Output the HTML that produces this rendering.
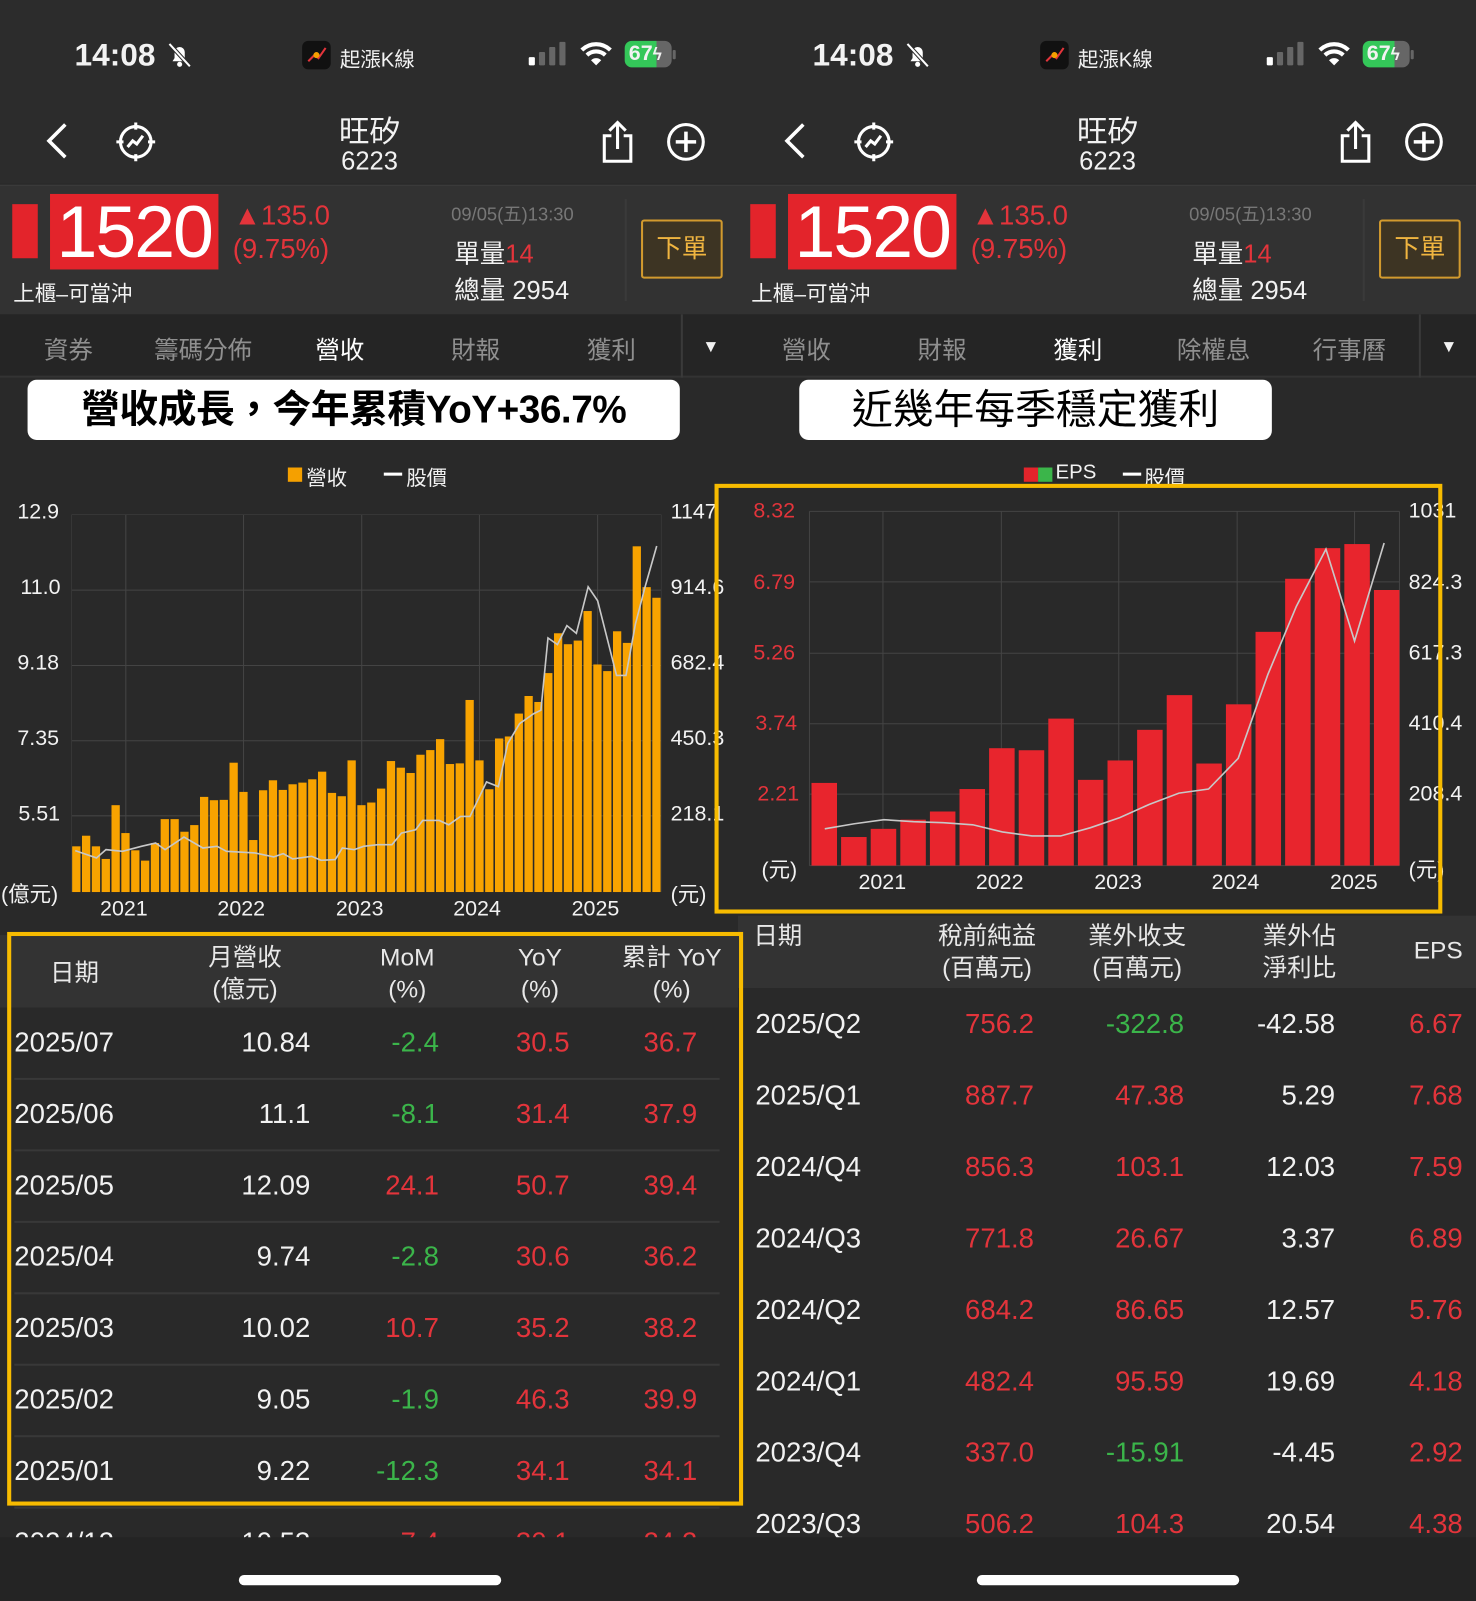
<!DOCTYPE html>
<html><head><meta charset="utf-8">
<style>
*{margin:0;padding:0;box-sizing:border-box}
html,body{width:1476px;height:1600px;overflow:hidden;background:#292929}
#w{position:absolute;left:0;top:0;width:1446px;height:1568px;transform:scale(1.02075);transform-origin:0 0;font-family:"Liberation Sans","Noto Sans CJK TC",sans-serif;color:#f2f2f2}
.p{position:absolute;top:0;width:723px;height:1568px;overflow:hidden;background:#292929}
.a{position:absolute;white-space:nowrap}
.r{color:#e3343b}.g{color:#3bb54a}.gy{color:#9a9a9a}
.hdr{position:absolute;left:0;top:0;width:723px;height:180px;background:#2c2c2c}
.price{position:absolute;left:0;top:181px;width:723px;height:127px;background:#323232;border-top:1px solid #3c3c3c}
.tabs{position:absolute;left:0;top:308px;width:723px;height:62px;background:#252525;border-bottom:2px solid #333}
.tab{position:absolute;top:15px;font-size:24px;color:#8f8f8f;transform:translateX(-50%)}
.th{position:absolute;left:0;width:723px;background:#333}
.c{transform:translateX(-50%);text-align:center;font-size:24px;line-height:31px;color:#e8e8e8}
.row{font-size:27px}
.sep{position:absolute;left:14px;width:691px;height:2px;background:#383838}
.bottom{position:absolute;left:0;top:1506px;width:723px;height:62px;background:#242424}
.home{position:absolute;top:1543px;width:257px;height:10px;border-radius:5px;background:#fff}
.yb{position:absolute;border:4px solid #f7bb00}
</style></head><body><div id="w">

<!-- LEFT PANEL -->
<div class="p" style="left:0">
 <div class="hdr"></div>
 <div class="a" style="left:73px;top:36px;font-size:31px;font-weight:bold">14:08</div>
 <svg class="a" style="left:162px;top:40px" width="28" height="28" viewBox="0 0 28 28"><path d="M7 20h14l-2-3v-6a5 5 0 0 0-10 0v6z" fill="#fff"/><circle cx="14" cy="23" r="2.5" fill="#fff"/><path d="M4 3l20 22" stroke="#2c2c2c" stroke-width="4"/><path d="M4 3l20 22" stroke="#fff" stroke-width="2"/></svg>
 <div class="a" style="left:296px;top:40px;width:28px;height:28px;border-radius:6px;background:#111"><svg width="28" height="28"><path d="M6 20l6-6 4 3 7-10" stroke="#e3343b" stroke-width="2" fill="none"/><circle cx="14" cy="14" r="3" fill="#f5a000"/></svg></div>
 <div class="a" style="left:333px;top:42px;font-size:20px">起漲K線</div>
 <svg class="a" style="left:516px;top:40px" width="40" height="26"><rect x="2" y="16" width="6" height="8" rx="1" fill="#fff"/><rect x="12" y="11" width="6" height="13" rx="1" fill="#666"/><rect x="22" y="6" width="6" height="18" rx="1" fill="#666"/><rect x="32" y="1" width="6" height="23" rx="1" fill="#666"/></svg>
 <svg class="a" style="left:568px;top:40px" width="32" height="26" viewBox="0 0 32 26"><path d="M2 9a20 20 0 0 1 28 0" stroke="#fff" stroke-width="4" fill="none"/><path d="M7 14a13 13 0 0 1 18 0" stroke="#fff" stroke-width="4" fill="none"/><path d="M16 24l-5-5a7 7 0 0 1 10 0z" fill="#fff"/></svg>
 <div class="a" style="left:612px;top:40px;width:46px;height:26px;border-radius:7px;background:linear-gradient(90deg,#34c759 68%,#666 68%);font-size:21px;font-weight:bold;line-height:26px;padding-left:4px">67<span style="font-size:17px">ϟ</span></div>
 <div class="a" style="left:659px;top:49px;width:3px;height:9px;background:#666;border-radius:1px"></div>

 <svg class="a" style="left:40px;top:118px" width="30" height="40"><path d="M24 4L8 20l16 16" stroke="#fff" stroke-width="3.5" fill="none"/></svg>
 <svg class="a" style="left:112px;top:118px" width="42" height="42" viewBox="0 0 42 42"><circle cx="21" cy="21" r="15" stroke="#fff" stroke-width="3" fill="none"/><path d="M21 2v7M21 33v7M2 21h7M33 21h7" stroke="#fff" stroke-width="3"/><path d="M13 26l5-6 4 3 6-8" stroke="#fff" stroke-width="3" fill="none"/></svg>
 <div class="a" style="left:362px;top:104px;transform:translateX(-50%);font-size:30px">旺矽</div>
 <div class="a" style="left:362px;top:144px;transform:translateX(-50%);font-size:25px">6223</div>
 <svg class="a" style="left:588px;top:117px" width="34" height="44" viewBox="0 0 34 44"><path d="M11 16H4v25h26V16h-7" stroke="#fff" stroke-width="3" fill="none"/><path d="M17 29V4M9 11l8-8 8 8" stroke="#fff" stroke-width="3" fill="none"/></svg>
 <svg class="a" style="left:651px;top:118px" width="42" height="42"><circle cx="21" cy="21" r="17" stroke="#fff" stroke-width="3" fill="none"/><path d="M21 11v20M11 21h20" stroke="#fff" stroke-width="3.5"/></svg>

 <div class="price"></div>
 <div class="a" style="left:12px;top:200px;width:25px;height:53px;background:#e3242b"></div>
 <div class="a" style="left:49px;top:190px;width:165px;height:74px;background:#e3242b;color:#fff;font-size:72px;line-height:76px;letter-spacing:-2px;text-align:center">1520</div>
 <div class="a r" style="left:229px;top:196px;font-size:27px">▲135.0</div>
 <div class="a r" style="left:228px;top:229px;font-size:27px">(9.75%)</div>
 <div class="a" style="left:13px;top:272px;font-size:21px">上櫃–可當沖</div>
 <div class="a" style="left:442px;top:196px;font-size:18px;color:#777">09/05(五)13:30</div>
 <div class="a" style="left:445px;top:229px;font-size:25px">單量<span class="r">14</span></div>
 <div class="a" style="left:445px;top:265px;font-size:25px">總量 2954</div>
 <div class="a" style="left:612px;top:195px;width:2px;height:100px;background:#3a3a3a"></div>
 <div class="a" style="left:628px;top:215px;width:80px;height:58px;border:2px solid #d29a2e;border-radius:3px;background:#3d3423;color:#f0b540;font-size:25px;text-align:center;line-height:54px">下單</div>

 <div class="tabs"></div>
 <div class="tab" style="left:67px;top:323px">資券</div>
 <div class="tab" style="left:199px;top:323px">籌碼分佈</div>
 <div class="tab" style="left:333px;top:323px;color:#fff">營收</div>
 <div class="tab" style="left:466px;top:323px">財報</div>
 <div class="tab" style="left:599px;top:323px">獲利</div>
 <div class="a" style="left:667px;top:308px;width:2px;height:62px;background:#3a3a3a"></div>
 <div class="a" style="left:688px;top:330px;font-size:17px">▼</div>

 <div class="a" style="left:27px;top:372px;width:639px;height:59px;background:#fff;border-radius:9px;color:#000;font-size:38px;font-weight:bold;text-align:center;line-height:60px;letter-spacing:-0.5px">營收成長，今年累積YoY+36.7%</div>

 <div class="a" style="left:282px;top:458px;width:14px;height:14px;background:#f5a000"></div>
 <div class="a" style="left:300px;top:452px;font-size:20px">營收</div>
 <div class="a" style="left:376px;top:463px;width:18px;height:3px;background:#fff"></div>
 <div class="a" style="left:398px;top:452px;font-size:20px">股價</div>

 <div class="a" style="left:17px;top:490px;font-size:21px">12.9</div>
 <div class="a" style="left:20px;top:564px;font-size:21px">11.0</div>
 <div class="a" style="left:17px;top:638px;font-size:21px">9.18</div>
 <div class="a" style="left:17px;top:712px;font-size:21px">7.35</div>
 <div class="a" style="left:18px;top:786px;font-size:21px">5.51</div>
 <div class="a" style="left:1px;top:860px;font-size:21px">(億元)</div>
 <div class="a" style="left:657px;top:490px;font-size:21px">1147</div>
 <div class="a" style="left:657px;top:564px;font-size:21px">914.6</div>
 <div class="a" style="left:657px;top:638px;font-size:21px">682.4</div>
 <div class="a" style="left:657px;top:712px;font-size:21px">450.3</div>
 <div class="a" style="left:657px;top:786px;font-size:21px">218.1</div>
 <div class="a" style="left:657px;top:860px;font-size:21px">(元)</div>
 <div class="a" style="left:98px;top:879px;font-size:21px">2021</div>
 <div class="a" style="left:213px;top:879px;font-size:21px">2022</div>
 <div class="a" style="left:329px;top:879px;font-size:21px">2023</div>
 <div class="a" style="left:444px;top:879px;font-size:21px">2024</div>
 <div class="a" style="left:560px;top:879px;font-size:21px">2025</div>

 <svg class="a" style="left:70px;top:504px" width="578" height="370" viewBox="152 190 1248 1138" preserveAspectRatio="none">
  <g stroke="#444" stroke-width="1" vector-effect="non-scaling-stroke">
   <path d="M152 190H1400M152 418H1400M152 645H1400M152 872H1400M152 1098H1400M267 190V1328M516 190V1328M766 190V1328M1015 190V1328M1265 190V1328M152 190V1328M1400 190V1328" vector-effect="non-scaling-stroke"/>
  </g>
  <g fill="#f8a300">
<rect x="153.5" y="1190" width="17.5" height="138"/><rect x="174.3" y="1158" width="17.5" height="170"/><rect x="195.1" y="1190" width="17.5" height="138"/><rect x="215.9" y="1228" width="17.5" height="100"/><rect x="236.7" y="1066" width="17.5" height="262"/><rect x="257.5" y="1150" width="17.5" height="178"/><rect x="278.3" y="1202" width="17.5" height="126"/><rect x="299.1" y="1233" width="17.5" height="95"/><rect x="319.9" y="1180" width="17.5" height="148"/><rect x="340.7" y="1108" width="17.5" height="220"/><rect x="361.5" y="1108" width="17.5" height="220"/><rect x="382.3" y="1146" width="17.5" height="182"/><rect x="403.1" y="1126" width="17.5" height="202"/><rect x="423.9" y="1041" width="17.5" height="287"/><rect x="444.7" y="1051" width="17.5" height="277"/><rect x="465.5" y="1050" width="17.5" height="278"/><rect x="486.3" y="938" width="17.5" height="390"/><rect x="507.1" y="1026" width="17.5" height="302"/><rect x="527.9" y="1171" width="17.5" height="157"/><rect x="548.7" y="1021" width="17.5" height="307"/><rect x="569.5" y="991" width="17.5" height="337"/><rect x="590.3" y="1020" width="17.5" height="308"/><rect x="611.1" y="1003" width="17.5" height="325"/><rect x="631.9" y="998" width="17.5" height="330"/><rect x="652.7" y="988" width="17.5" height="340"/><rect x="673.5" y="965" width="17.5" height="363"/><rect x="694.3" y="1029" width="17.5" height="299"/><rect x="715.1" y="1039" width="17.5" height="289"/><rect x="735.9" y="931" width="17.5" height="397"/><rect x="756.7" y="1066" width="17.5" height="262"/><rect x="777.5" y="1058" width="17.5" height="270"/><rect x="798.3" y="1016" width="17.5" height="312"/><rect x="819.1" y="933" width="17.5" height="395"/><rect x="839.9" y="953" width="17.5" height="375"/><rect x="860.7" y="969" width="17.5" height="359"/><rect x="881.5" y="914" width="17.5" height="414"/><rect x="902.3" y="900" width="17.5" height="428"/><rect x="923.1" y="867" width="17.5" height="461"/><rect x="943.9" y="942" width="17.5" height="386"/><rect x="964.7" y="940" width="17.5" height="388"/><rect x="985.5" y="749" width="17.5" height="579"/><rect x="1006.3" y="931" width="17.5" height="397"/><rect x="1027.1" y="1018" width="17.5" height="310"/><rect x="1047.9" y="865" width="17.5" height="463"/><rect x="1068.7" y="859" width="17.5" height="469"/><rect x="1089.5" y="790" width="17.5" height="538"/><rect x="1110.3" y="737" width="17.5" height="591"/><rect x="1131.1" y="755" width="17.5" height="573"/><rect x="1151.9" y="668" width="17.5" height="660"/><rect x="1172.7" y="548" width="17.5" height="780"/><rect x="1193.5" y="581" width="17.5" height="747"/><rect x="1214.3" y="570" width="17.5" height="758"/><rect x="1235.1" y="481" width="17.5" height="847"/><rect x="1255.9" y="642" width="17.5" height="686"/><rect x="1276.7" y="662" width="17.5" height="666"/><rect x="1297.5" y="542" width="17.5" height="786"/><rect x="1318.3" y="577" width="17.5" height="751"/><rect x="1339.1" y="286" width="17.5" height="1042"/><rect x="1359.9" y="409" width="17.5" height="919"/><rect x="1380.7" y="441" width="17.5" height="887"/>
  </g>
  <polyline fill="none" stroke="#c8c8c8" stroke-width="1.6" vector-effect="non-scaling-stroke" points="160,1203 205,1225 225,1200 260,1205 300,1190 330,1180 350,1200 390,1162 430,1195 460,1190 480,1205 540,1210 580,1222 600,1212 620,1228 660,1220 680,1232 710,1230 725,1195 750,1200 770,1190 800,1185 830,1185 850,1150 880,1140 895,1112 930,1112 950,1125 975,1100 995,1100 1030,996 1055,1010 1075,880 1100,820 1130,790 1145,780 1160,562 1180,582 1200,525 1220,548 1245,408 1265,450 1305,675 1325,675 1345,520 1365,410 1390,285"/>
 </svg>

 <div class="th" style="top:916px;height:71px"></div>
 <div class="a c" style="left:73px;top:938px">日期</div>
 <div class="a c" style="left:240px;top:923px">月營收<br>(億元)</div>
 <div class="a c" style="left:399px;top:923px">MoM<br>(%)</div>
 <div class="a c" style="left:529px;top:923px">YoY<br>(%)</div>
 <div class="a c" style="left:658px;top:923px">累計 YoY<br>(%)</div>

 <div id="lrows"></div>
 <!-- rows -->
 <div class="a row" style="left:14px;top:1006px">2025/07</div><div class="a row" style="right:419px;top:1006px">10.84</div><div class="a row g" style="right:293px;top:1006px">-2.4</div><div class="a row r" style="right:165px;top:1006px">30.5</div><div class="a row r" style="right:40px;top:1006px">36.7</div>
 <div class="sep" style="top:1056px"></div>
 <div class="a row" style="left:14px;top:1076px">2025/06</div><div class="a row" style="right:419px;top:1076px">11.1</div><div class="a row g" style="right:293px;top:1076px">-8.1</div><div class="a row r" style="right:165px;top:1076px">31.4</div><div class="a row r" style="right:40px;top:1076px">37.9</div>
 <div class="sep" style="top:1126px"></div>
 <div class="a row" style="left:14px;top:1146px">2025/05</div><div class="a row" style="right:419px;top:1146px">12.09</div><div class="a row r" style="right:293px;top:1146px">24.1</div><div class="a row r" style="right:165px;top:1146px">50.7</div><div class="a row r" style="right:40px;top:1146px">39.4</div>
 <div class="sep" style="top:1196px"></div>
 <div class="a row" style="left:14px;top:1216px">2025/04</div><div class="a row" style="right:419px;top:1216px">9.74</div><div class="a row g" style="right:293px;top:1216px">-2.8</div><div class="a row r" style="right:165px;top:1216px">30.6</div><div class="a row r" style="right:40px;top:1216px">36.2</div>
 <div class="sep" style="top:1266px"></div>
 <div class="a row" style="left:14px;top:1286px">2025/03</div><div class="a row" style="right:419px;top:1286px">10.02</div><div class="a row r" style="right:293px;top:1286px">10.7</div><div class="a row r" style="right:165px;top:1286px">35.2</div><div class="a row r" style="right:40px;top:1286px">38.2</div>
 <div class="sep" style="top:1336px"></div>
 <div class="a row" style="left:14px;top:1356px">2025/02</div><div class="a row" style="right:419px;top:1356px">9.05</div><div class="a row g" style="right:293px;top:1356px">-1.9</div><div class="a row r" style="right:165px;top:1356px">46.3</div><div class="a row r" style="right:40px;top:1356px">39.9</div>
 <div class="sep" style="top:1406px"></div>
 <div class="a row" style="left:14px;top:1426px">2025/01</div><div class="a row" style="right:419px;top:1426px">9.22</div><div class="a row g" style="right:293px;top:1426px">-12.3</div><div class="a row r" style="right:165px;top:1426px">34.1</div><div class="a row r" style="right:40px;top:1426px">34.1</div>
 <div class="sep" style="top:1476px"></div>
 <div class="a row" style="left:14px;top:1496px">2024/12</div><div class="a row" style="right:419px;top:1496px">10.53</div><div class="a row r" style="right:293px;top:1496px">7.4</div><div class="a row r" style="right:165px;top:1496px">30.1</div><div class="a row r" style="right:40px;top:1496px">24.2</div>

 <div class="bottom"></div>
 <div class="home" style="left:234px"></div>
</div>

<!-- RIGHT PANEL -->
<div class="p" style="left:723px">
 <div class="hdr"></div>
 <div class="a" style="left:73px;top:36px;font-size:31px;font-weight:bold">14:08</div>
 <svg class="a" style="left:162px;top:40px" width="28" height="28" viewBox="0 0 28 28"><path d="M7 20h14l-2-3v-6a5 5 0 0 0-10 0v6z" fill="#fff"/><circle cx="14" cy="23" r="2.5" fill="#fff"/><path d="M4 3l20 22" stroke="#2c2c2c" stroke-width="4"/><path d="M4 3l20 22" stroke="#fff" stroke-width="2"/></svg>
 <div class="a" style="left:296px;top:40px;width:28px;height:28px;border-radius:6px;background:#111"><svg width="28" height="28"><path d="M6 20l6-6 4 3 7-10" stroke="#e3343b" stroke-width="2" fill="none"/><circle cx="14" cy="14" r="3" fill="#f5a000"/></svg></div>
 <div class="a" style="left:333px;top:42px;font-size:20px">起漲K線</div>
 <svg class="a" style="left:516px;top:40px" width="40" height="26"><rect x="2" y="16" width="6" height="8" rx="1" fill="#fff"/><rect x="12" y="11" width="6" height="13" rx="1" fill="#666"/><rect x="22" y="6" width="6" height="18" rx="1" fill="#666"/><rect x="32" y="1" width="6" height="23" rx="1" fill="#666"/></svg>
 <svg class="a" style="left:568px;top:40px" width="32" height="26" viewBox="0 0 32 26"><path d="M2 9a20 20 0 0 1 28 0" stroke="#fff" stroke-width="4" fill="none"/><path d="M7 14a13 13 0 0 1 18 0" stroke="#fff" stroke-width="4" fill="none"/><path d="M16 24l-5-5a7 7 0 0 1 10 0z" fill="#fff"/></svg>
 <div class="a" style="left:612px;top:40px;width:46px;height:26px;border-radius:7px;background:linear-gradient(90deg,#34c759 68%,#666 68%);font-size:21px;font-weight:bold;line-height:26px;padding-left:4px">67<span style="font-size:17px">ϟ</span></div>
 <div class="a" style="left:659px;top:49px;width:3px;height:9px;background:#666;border-radius:1px"></div>

 <svg class="a" style="left:40px;top:118px" width="30" height="40"><path d="M24 4L8 20l16 16" stroke="#fff" stroke-width="3.5" fill="none"/></svg>
 <svg class="a" style="left:112px;top:118px" width="42" height="42" viewBox="0 0 42 42"><circle cx="21" cy="21" r="15" stroke="#fff" stroke-width="3" fill="none"/><path d="M21 2v7M21 33v7M2 21h7M33 21h7" stroke="#fff" stroke-width="3"/><path d="M13 26l5-6 4 3 6-8" stroke="#fff" stroke-width="3" fill="none"/></svg>
 <div class="a" style="left:362px;top:104px;transform:translateX(-50%);font-size:30px">旺矽</div>
 <div class="a" style="left:362px;top:144px;transform:translateX(-50%);font-size:25px">6223</div>
 <svg class="a" style="left:588px;top:117px" width="34" height="44" viewBox="0 0 34 44"><path d="M11 16H4v25h26V16h-7" stroke="#fff" stroke-width="3" fill="none"/><path d="M17 29V4M9 11l8-8 8 8" stroke="#fff" stroke-width="3" fill="none"/></svg>
 <svg class="a" style="left:651px;top:118px" width="42" height="42"><circle cx="21" cy="21" r="17" stroke="#fff" stroke-width="3" fill="none"/><path d="M21 11v20M11 21h20" stroke="#fff" stroke-width="3.5"/></svg>

 <div class="price"></div>
 <div class="a" style="left:12px;top:200px;width:25px;height:53px;background:#e3242b"></div>
 <div class="a" style="left:49px;top:190px;width:165px;height:74px;background:#e3242b;color:#fff;font-size:72px;line-height:76px;letter-spacing:-2px;text-align:center">1520</div>
 <div class="a r" style="left:229px;top:196px;font-size:27px">▲135.0</div>
 <div class="a r" style="left:228px;top:229px;font-size:27px">(9.75%)</div>
 <div class="a" style="left:13px;top:272px;font-size:21px">上櫃–可當沖</div>
 <div class="a" style="left:442px;top:196px;font-size:18px;color:#777">09/05(五)13:30</div>
 <div class="a" style="left:445px;top:229px;font-size:25px">單量<span class="r">14</span></div>
 <div class="a" style="left:445px;top:265px;font-size:25px">總量 2954</div>
 <div class="a" style="left:612px;top:195px;width:2px;height:100px;background:#3a3a3a"></div>
 <div class="a" style="left:628px;top:215px;width:80px;height:58px;border:2px solid #d29a2e;border-radius:3px;background:#3d3423;color:#f0b540;font-size:25px;text-align:center;line-height:54px">下單</div>

 <div class="tabs"></div>
 <div class="tab" style="left:67px;top:323px">營收</div>
 <div class="tab" style="left:200px;top:323px">財報</div>
 <div class="tab" style="left:333px;top:323px;color:#fff">獲利</div>
 <div class="tab" style="left:466px;top:323px">除權息</div>
 <div class="tab" style="left:599px;top:323px">行事曆</div>
 <div class="a" style="left:667px;top:308px;width:2px;height:62px;background:#3a3a3a"></div>
 <div class="a" style="left:688px;top:330px;font-size:17px">▼</div>

 <div class="a" style="left:60px;top:372px;width:463px;height:59px;background:#fff;border-radius:9px;color:#000;font-size:40px;text-align:center;line-height:60px">近幾年每季穩定獲利</div>

 <div class="a" style="left:280px;top:458px;width:14px;height:14px;background:#e3242b"></div>
 <div class="a" style="left:294px;top:458px;width:14px;height:14px;background:#3bb54a"></div>
 <div class="a" style="left:311px;top:452px;font-size:20px">EPS</div>
 <div class="a" style="left:377px;top:463px;width:18px;height:3px;background:#fff"></div>
 <div class="a" style="left:398px;top:452px;font-size:20px">股價</div>

 <div class="a r" style="left:15px;top:489px;font-size:21px">8.32</div>
 <div class="a r" style="left:15px;top:559px;font-size:21px">6.79</div>
 <div class="a r" style="left:15px;top:628px;font-size:21px">5.26</div>
 <div class="a r" style="left:17px;top:697px;font-size:21px">3.74</div>
 <div class="a r" style="left:19px;top:766px;font-size:21px">2.21</div>
 <div class="a" style="left:23px;top:836px;font-size:21px">(元)</div>
 <div class="a" style="left:657px;top:489px;font-size:21px">1031</div>
 <div class="a" style="left:657px;top:559px;font-size:21px">824.3</div>
 <div class="a" style="left:657px;top:628px;font-size:21px">617.3</div>
 <div class="a" style="left:657px;top:697px;font-size:21px">410.4</div>
 <div class="a" style="left:657px;top:766px;font-size:21px">208.4</div>
 <div class="a" style="left:657px;top:836px;font-size:21px">(元)</div>
 <div class="a" style="left:118px;top:853px;font-size:21px">2021</div>
 <div class="a" style="left:233px;top:853px;font-size:21px">2022</div>
 <div class="a" style="left:349px;top:853px;font-size:21px">2023</div>
 <div class="a" style="left:464px;top:853px;font-size:21px">2024</div>
 <div class="a" style="left:580px;top:853px;font-size:21px">2025</div>

 <svg class="a" style="left:0;top:0" width="723" height="900">
  <path d="M70 501H648M70 570H648M70 640H648M70 709H648M70 778H648M70 848H648M70 501V848M648 501V848M142 501V848M258 501V848M373 501V848M489 501V848M604 501V848" stroke="#444" stroke-width="1" fill="none"/>
  <g fill="#e8252d">
   <rect x="72" y="767" width="25" height="81"/><rect x="101" y="820" width="25" height="28"/><rect x="130" y="812" width="25" height="36"/><rect x="159" y="803" width="25" height="45"/><rect x="188" y="795" width="25" height="53"/><rect x="217" y="773" width="25" height="75"/><rect x="246" y="733" width="25" height="115"/><rect x="275" y="735" width="25" height="113"/><rect x="304" y="704" width="25" height="144"/><rect x="333" y="764" width="25" height="84"/><rect x="362" y="745" width="25" height="103"/><rect x="391" y="715" width="25" height="133"/><rect x="420" y="681" width="25" height="167"/><rect x="449" y="748" width="25" height="100"/><rect x="478" y="690" width="25" height="158"/><rect x="507" y="619" width="25" height="229"/><rect x="536" y="567" width="25" height="281"/><rect x="565" y="537" width="25" height="311"/><rect x="594" y="533" width="25" height="315"/><rect x="623" y="578" width="25" height="270"/>
  </g>
  <polyline fill="none" stroke="#c8c8c8" stroke-width="1.6" points="85,812 114,807 143,803 172,805 201,806 230,808 259,815 288,819 316,819 345,811 374,801 403,788 432,777 461,773 490,743 519,661 547,594 576,538 604,628 633,532"/>
 </svg>

 <div class="th" style="top:897px;height:71px"></div>
 <div class="a" style="left:15px;top:902px;font-size:24px;line-height:31px;color:#e8e8e8">日期</div>
 <div class="a c" style="left:244px;top:902px">稅前純益<br>(百萬元)</div>
 <div class="a c" style="left:391px;top:902px">業外收支<br>(百萬元)</div>
 <div class="a" style="right:137px;top:902px;font-size:24px;line-height:31px;color:#e8e8e8;text-align:right">業外佔<br>淨利比</div>
 <div class="a" style="right:13px;top:918px;font-size:24px;color:#e8e8e8">EPS</div>

 <div class="a row" style="left:17px;top:988px">2025/Q2</div><div class="a row r" style="right:433px;top:988px">756.2</div><div class="a row g" style="right:286px;top:988px">-322.8</div><div class="a row" style="right:138px;top:988px">-42.58</div><div class="a row r" style="right:13px;top:988px">6.67</div>
 <div class="a row" style="left:17px;top:1058px">2025/Q1</div><div class="a row r" style="right:433px;top:1058px">887.7</div><div class="a row r" style="right:286px;top:1058px">47.38</div><div class="a row" style="right:138px;top:1058px">5.29</div><div class="a row r" style="right:13px;top:1058px">7.68</div>
 <div class="a row" style="left:17px;top:1128px">2024/Q4</div><div class="a row r" style="right:433px;top:1128px">856.3</div><div class="a row r" style="right:286px;top:1128px">103.1</div><div class="a row" style="right:138px;top:1128px">12.03</div><div class="a row r" style="right:13px;top:1128px">7.59</div>
 <div class="a row" style="left:17px;top:1198px">2024/Q3</div><div class="a row r" style="right:433px;top:1198px">771.8</div><div class="a row r" style="right:286px;top:1198px">26.67</div><div class="a row" style="right:138px;top:1198px">3.37</div><div class="a row r" style="right:13px;top:1198px">6.89</div>
 <div class="a row" style="left:17px;top:1268px">2024/Q2</div><div class="a row r" style="right:433px;top:1268px">684.2</div><div class="a row r" style="right:286px;top:1268px">86.65</div><div class="a row" style="right:138px;top:1268px">12.57</div><div class="a row r" style="right:13px;top:1268px">5.76</div>
 <div class="a row" style="left:17px;top:1338px">2024/Q1</div><div class="a row r" style="right:433px;top:1338px">482.4</div><div class="a row r" style="right:286px;top:1338px">95.59</div><div class="a row" style="right:138px;top:1338px">19.69</div><div class="a row r" style="right:13px;top:1338px">4.18</div>
 <div class="a row" style="left:17px;top:1408px">2023/Q4</div><div class="a row r" style="right:433px;top:1408px">337.0</div><div class="a row g" style="right:286px;top:1408px">-15.91</div><div class="a row" style="right:138px;top:1408px">-4.45</div><div class="a row r" style="right:13px;top:1408px">2.92</div>
 <div class="a row" style="left:17px;top:1478px">2023/Q3</div><div class="a row r" style="right:433px;top:1478px">506.2</div><div class="a row r" style="right:286px;top:1478px">104.3</div><div class="a row" style="right:138px;top:1478px">20.54</div><div class="a row r" style="right:13px;top:1478px">4.38</div>

 <div class="bottom"></div>
 <div class="home" style="left:234px"></div>
</div>

<div class="yb" style="left:7px;top:913px;width:721px;height:562px"></div>
<div class="yb" style="left:700px;top:474px;width:713px;height:421px"></div>
</div></body></html>
